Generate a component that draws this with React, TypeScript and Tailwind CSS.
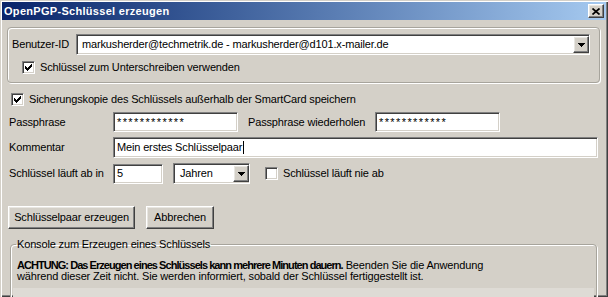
import React from "react";

const sunken =
  "border border-t-[#808080] border-l-[#808080] border-b-white border-r-white shadow-[inset_1px_1px_0_#404040,inset_-1px_-1px_0_#d4d0c8] bg-white";
const raised =
  "border border-t-white border-l-white border-b-[#404040] border-r-[#404040] shadow-[inset_-1px_-1px_0_#808080,inset_1px_1px_0_#e8e6e1] bg-[#d4d0c8]";
const groupBox =
  "rounded-[4px] border border-[#a7a49c] shadow-[inset_1px_1px_0_#fff,1px_1px_0_#fff]";

const CheckBox = ({ checked }: { checked?: boolean }) => (
  <span className={`flex h-[13px] w-[13px] shrink-0 items-center justify-center ${sunken}`}>
    {checked && (
      <svg width="7" height="7" viewBox="0 0 7 7" shapeRendering="crispEdges">
        <path d="M0 2h1v1h1v1h1v-1h1v-1h1v-1h1v-1h1v3h-1v1h-1v1h-1v1h-1v1h-1v-1h-1v-1h-1z" fill="#000" />
      </svg>
    )}
  </span>
);

const DropButton = () => (
  <span className={`flex h-full w-[16px] shrink-0 items-center justify-center ${raised}`}>
    <svg width="7" height="4" viewBox="0 0 7 4" shapeRendering="crispEdges">
      <path d="M0 0h7v1h-1v1h-1v1h-1v1h-1v-1h-1v-1h-1v-1h-1z" fill="#000" />
    </svg>
  </span>
);

const TextBox = ({ value, className, masked }: { value: string; className: string; masked?: boolean }) => (
  <div className={`flex items-center pl-[3px] ${sunken} ${className}`}>
    <span className={masked ? "tracking-[1.4px]" : ""}>{value}</span>
  </div>
);

export default function App() {
  return (
    <div className="h-[297px] w-[608px] overflow-hidden bg-[#d4d0c8] px-[2px] pt-[2px] font-['Liberation_Sans',Arial,sans-serif] text-[11px] leading-[13px] tracking-[-0.15px] text-black shadow-[inset_1px_1px_0_#d4d0c8,inset_2px_2px_0_#fff,inset_-1px_-1px_0_#404040,inset_-2px_-2px_0_#808080]">
      {/* title bar */}
      <div className="flex h-[18px] items-center justify-between bg-linear-to-r from-[#0a246a] to-[#a6caf0] px-[2px]">
        <span className="font-bold tracking-[0.3px] text-white">OpenPGP-Schlüssel erzeugen</span>
        <span className={`flex h-[14px] w-[16px] items-center justify-center ${raised}`}>
          <svg width="8" height="7" viewBox="0 0 8 7">
            <path d="M0.5 0.5L7.5 6.5M7.5 0.5L0.5 6.5" stroke="#000" strokeWidth="1.7" />
          </svg>
        </span>
      </div>

      <div className="pl-[5px] pr-[6px]">
        {/* Benutzer-ID group */}
        <div className={`mt-[7px] pb-[8px] pt-[6px] ${groupBox}`}>
          <div className="flex items-center pl-[4px] pr-[9px]">
            <span className="w-[64px]">Benutzer-ID</span>
            <div className={`flex h-[21px] flex-1 items-center pl-[5px] ${sunken}`}>
              <span className="flex-1">markusherder@techmetrik.de - markusherder@d101.x-mailer.de</span>
              <div className="h-[17px]">
                <DropButton />
              </div>
            </div>
          </div>
          <div className="mt-[6px] flex items-center gap-[5px] pl-[14px]">
            <CheckBox checked />
            <span>Schlüssel zum Unterschreiben verwenden</span>
          </div>
        </div>

        <div className="mt-[10px] flex items-center gap-[5px] pl-[4px]">
          <CheckBox checked />
          <span>Sicherungskopie des Schlüssels außerhalb der SmartCard speichern</span>
        </div>

        <div className="mt-[6px] flex items-center pl-[2px]">
          <span className="w-[104px]">Passphrase</span>
          <TextBox value="************" masked className="h-[20px] w-[125px]" />
          <span className="ml-[10px] w-[127px]">Passphrase wiederholen</span>
          <TextBox value="************" masked className="h-[20px] w-[125px]" />
        </div>

        <div className="mt-[5px] flex items-center pl-[2px] pr-[2px]">
          <span className="w-[104px]">Kommentar</span>
          <div className={`flex h-[21px] flex-1 items-center pl-[3px] ${sunken}`}>
            <span>Mein erstes Schlüsselpaar</span>
            <span className="ml-[1px] h-[13px] w-[1px] bg-black" />
          </div>
        </div>

        <div className="mt-[5px] flex items-center pl-[2px]">
          <span className="w-[104px]">Schlüssel läuft ab in</span>
          <TextBox value="5" className="h-[20px] w-[50px]" />
          <div className={`ml-[10px] flex h-[21px] w-[77px] items-center pl-[6px] ${sunken}`}>
            <span className="flex-1">Jahren</span>
            <div className="h-[17px]">
              <DropButton />
            </div>
          </div>
          <span className="ml-[15px]">
            <CheckBox />
          </span>
          <span className="ml-[5px]">Schlüssel läuft nie ab</span>
        </div>

        <div className="mt-[22px] flex items-center pl-[1px]">
          <button className={`h-[23px] w-[127px] ${raised}`}>Schlüsselpaar erzeugen</button>
          <button className={`ml-[11px] h-[23px] w-[68px] ${raised}`}>Abbrechen</button>
        </div>

        <fieldset className={`mx-[3px] mt-[9px] px-[5px] ${groupBox}`}>
          <legend className="px-[1px]">Konsole zum Erzeugen eines Schlüssels</legend>
          <p className="mt-[9px] pl-[1px] leading-[11px]">
            <b className="tracking-[-0.95px]">ACHTUNG: Das Erzeugen eines Schlüssels kann mehrere Minuten dauern.</b> Beenden Sie die Anwendung
            <br />
            während dieser Zeit nicht. Sie werden informiert, sobald der Schlüssel fertiggestellt ist.
          </p>
          <div className="-mx-[3px] mt-[6px] h-[30px] bg-[#dedbd5]" />
        </fieldset>
      </div>
    </div>
  );
}
